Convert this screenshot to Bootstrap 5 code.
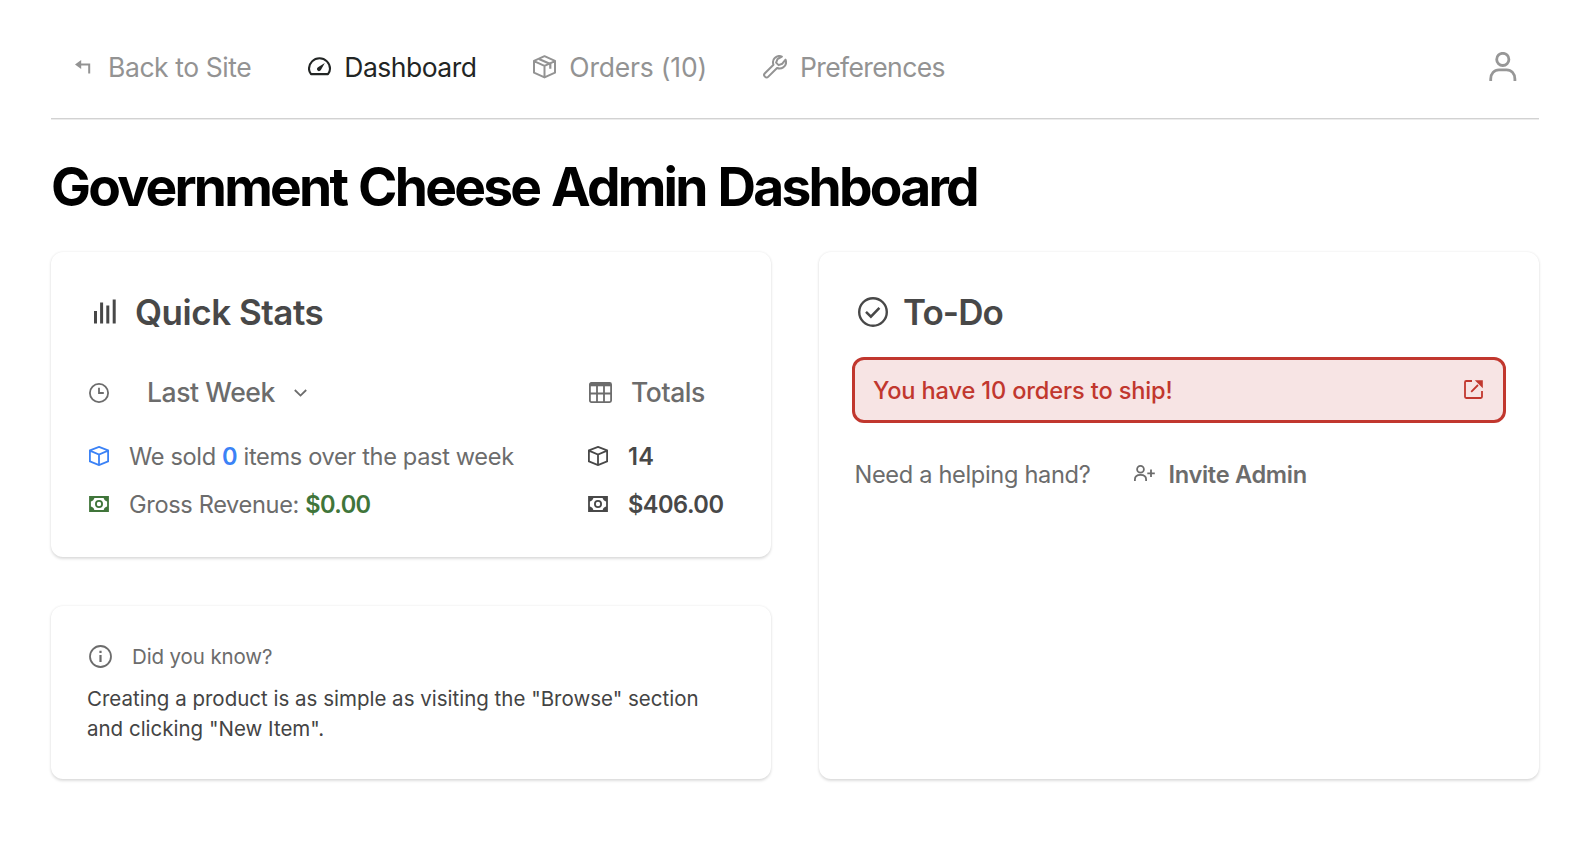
<!DOCTYPE html>
<html lang="en">
<head>
<meta charset="utf-8">
<meta name="viewport" content="width=device-width, initial-scale=1">
<title>Government Cheese Admin Dashboard</title>
<link href="https://cdn.jsdelivr.net/npm/bootstrap@5.3.0/dist/css/bootstrap.min.css" rel="stylesheet">
<style>
  body { font-family: Inter, "Liberation Sans", sans-serif; background: #fff; color: #6c6c6c; font-size: 23.6px; }
  svg { flex: none; display: block; fill: none; stroke: currentColor; stroke-width: 1.8; }
  a { color: inherit; text-decoration: none; }
  .page { padding: 0 45px 60px 51px; }
  .topbar { height: 119px; padding: 16px 22px 0 20.5px; border-bottom: 1px solid #d2d2d2; box-shadow: 0 1px 0 #ececec; }
  .topbar .nav-link { color: #939393; font-size: 26.5px; line-height: 40px; padding: 0; gap: 12.5px; letter-spacing: -.42px; }
  .topbar .nav-link.active { color: #222524; letter-spacing: -.52px; }
  .topbar .nav { gap: 56.5px; }
  .topbar .account { color: #979797; margin-bottom: 2px; }
  .page-title { font-size: 53.3px; font-weight: 700; line-height: 133px; height: 133px; letter-spacing: -2.76px; word-spacing: 2px; color: #000; padding-top: 1px; }
  .panel { border: 0; border-radius: 12px; box-shadow: 0 1.5px 3px rgba(0,0,0,.13), 0 0 3px rgba(0,0,0,.05); }
  .columns { grid-template-columns: 1fr 1fr; gap: 48px; }
  .left-col { gap: 48.5px; }
  .stats { height: 305px; padding: 38px 36px 0 37px; }
  .tip { height: 173.5px; padding: 36px 36px 0; font-size: 20.5px; }
  .todo { padding: 38px 33px 0; }
  .panel-title { font-size: 35px; font-weight: 600; line-height: 44px; color: #484848; letter-spacing: -.47px; }
  .line { height: 40px; line-height: 40px; white-space: nowrap; letter-spacing: -.35px; }
  .line svg.up { margin-bottom: 2.5px; }
  .period { width: 500px; }
  .subhead { font-size: 26.5px; font-weight: 500; letter-spacing: -.41px; }
  .strong-dark { color: #484848; }
  .sold { color: #3b82f6; }
  .money { color: #40753a; }
  .tip p { color: #444; line-height: 30px; margin: 12px 0 0; }
  .alert-ship { height: 66px; margin-top: 22.5px; padding: 2px 20.5px 0 18px; border: 3px solid #c1372e; border-radius: 12px; background: #f7e4e4; color: #c1372e; font-weight: 500; letter-spacing: -.14px; }
</style>
</head>
<body>
<svg width="0" height="0" class="position-absolute">
  <symbol id="cube" viewBox="0 0 20 20"><path d="M10 .9 19.1 4.4V15.4L10 19.1.9 15.4V4.4ZM.9 4.6 10 8.6l9.1-4M10 8.6V19"/></symbol>
  <symbol id="cash" viewBox="0 0 20 16"><path d="M1 1h18v14H1Z"/><path d="M1 1h4.500A4.500 4.500 0 0 1 1 5.500ZM19 1h-4.500a4.500 4.500 0 0 0 4.500 4.500ZM1 15h4.500a4.500 4.500 0 0 0-4.500-4.500ZM19 15h-4.500a4.500 4.500 0 0 1 4.500-4.500Z" fill="currentColor" stroke="none"/><circle cx="10" cy="8" r="3.100"/></symbol>
</svg>
<div class="page">
  <header class="topbar d-flex align-items-center justify-content-between">
    <nav class="nav flex-nowrap">
      <a class="nav-link d-flex align-items-center" href="#">
        <svg width="24" height="24" viewBox="0 0 24 24"><path d="M8 9.5h9.2v9" style="stroke-width:2"/><path d="M3 9.500 9.200 5v9Z" fill="currentColor" stroke="none"/></svg>
        Back to Site</a>
      <a class="nav-link active d-flex align-items-center" href="#">
        <svg width="24" height="24" viewBox="0 0 24 24" style="stroke-width:2.1"><path d="M3 19.1C1.700 17.600 1 16 1 13.800a10.500 10.500 0 0 1 21 0c0 2.200-.7 3.800-2 5.300Z" stroke-linejoin="round"/><path d="M16.800 7.900 13 14.800a2.100 2.100 0 1 1-3-2.600Z" fill="currentColor" stroke="none"/></svg>
        Dashboard</a>
      <a class="nav-link d-flex align-items-center" href="#">
        <svg width="24" height="24" viewBox="0 0 24 24" stroke-linejoin="round" style="stroke-width:2"><path d="M11.500 1.200 22 5.900V17.700L11.500 22.400 1 17.700V5.900ZM1 6.100l10.500 4.800L22 6.100M11.500 10.700v11.500"/><path d="m6 3.900 11.300 5.100v4.800" style="stroke-width:2.200"/></svg>
        <span style="letter-spacing:-.2px">Orders (10)</span></a>
      <a class="nav-link d-flex align-items-center" href="#">
        <svg width="24" height="24" viewBox="1.500 1.700 21.500 21.500" stroke-linejoin="round"><path d="m14.500 5.300-1.300 3.200 2.300 2.300 3.300-1.300 2.900-3.600c1.100 3-.1 5.500-2.100 6.900-1.700 1.200-3.700 1.200-5.500.600L6.300 21.100a2.100 2.100 0 0 1-3.100-3.100l7.700-7.500C10 8 10.500 5.800 12 4.400c1.700-1.700 4.200-2.200 6.400-1.300Z"/></svg>
        <span style="letter-spacing:-.6px">Preferences</span></a>
    </nav>
    <a class="account" href="#" aria-label="Account"><svg width="28" height="29" viewBox="0 0 28 29" style="stroke-width:2.8"><circle cx="13.800" cy="7.400" r="6.100"/><path d="M1.700 29v-2c0-5.500 3.500-9.200 8.300-9.200h7.600c4.800 0 8.300 3.700 8.300 9.200v2"/></svg></a>
  </header>

  <h1 class="page-title m-0">Government Cheese Admin Dashboard</h1>

  <main class="columns d-grid">
    <div class="left-col d-flex flex-column">
      <section class="panel card stats">
        <h2 class="panel-title d-flex align-items-center m-0">
          <svg style="stroke-width:3;margin:0 19px 2px 6px" width="22" height="25" viewBox="0 0 22 25"><path d="M1.500 12v12.500M7.600 3.500v21M13.800 6.500v18M20.200 .500v24"/></svg>
          Quick Stats</h2>
        <div class="line subhead d-flex" style="margin-top:38px">
          <div class="period d-flex align-items-center">
            <svg style="margin:1px 38px 0 1px" width="20" height="20" viewBox="0 0 20 20"><circle cx="10" cy="10" r="9.100"/><path d="M10 4.700V10h4.800"/></svg>
            Last Week
            <svg style="margin-left:19.5px;margin-top:2px" width="13" height="8" viewBox="0 0 13 8"><path d="m.8 1 5.700 5.600L12.200 1"/></svg>
          </div>
          <div class="d-flex align-items-center">
            <svg style="margin:1px 19.5px 0 .5px" width="23" height="21" viewBox="0 0 23 21"><rect x=".9" y=".9" width="21.200" height="19.200" rx="1.500"/><path d="M1 2.600h21" style="stroke-width:3.4"/><path d="M1 11.500h21M8 2v18M15 2v18"/></svg>
            Totals
          </div>
        </div>
        <div class="line d-flex" style="margin-top:25px">
          <div class="period d-flex align-items-center">
            <svg class="up sold" style="margin-left:1px;margin-right:20px" width="20" height="20"><use href="#cube"/></svg>
            <span>We sold <b class="sold fw-semibold">0</b> items over the past week</span>
          </div>
          <div class="strong-dark fw-semibold d-flex align-items-center">
            <svg class="up" style="margin-right:20px" width="20" height="20"><use href="#cube"/></svg>
            <span style="letter-spacing:.3px">14</span>
          </div>
        </div>
        <div class="line d-flex mt-2">
          <div class="period d-flex align-items-center">
            <svg class="up money" style="margin-left:1px;margin-right:20px" width="20" height="16"><use href="#cash"/></svg>
            <span>Gross Revenue: <b class="money fw-semibold" style="letter-spacing:-.6px">$0.00</b></span>
          </div>
          <div class="strong-dark fw-semibold d-flex align-items-center" style="letter-spacing:-.5px">
            <svg class="up" style="margin-right:20px" width="20" height="16"><use href="#cash"/></svg>
            $406.00
          </div>
        </div>
      </section>

      <section class="panel card tip">
        <div class="d-flex align-items-center" style="line-height:30px;letter-spacing:-.12px">
          <svg style="margin:0 20px 0 2px" width="23" height="23" viewBox="0 0 23 23"><circle cx="11.500" cy="11.500" r="10.500"/><path d="M11.500 10v7M11.500 5.800v2.200" style="stroke-width:2.2"/></svg>
          Did you know?
        </div>
        <p>Creating a product is as simple as visiting the "Browse" section and clicking "New Item".</p>
      </section>
    </div>

    <section class="panel card todo">
      <h2 class="panel-title d-flex align-items-center m-0" style="letter-spacing:-.93px">
        <svg style="margin:0 15px 1px 6px" width="30" height="30" viewBox="0 0 30 30"><circle cx="15" cy="15" r="13.800" style="stroke-width:2.4"/><path d="m8 14.800 4.900 4.900 8.500-8.900" style="stroke-width:2.5"/></svg>
        To-Do</h2>
      <a class="alert-ship d-flex align-items-center justify-content-between" href="#">
        You have 10 orders to ship!
        <svg style="margin-bottom:3px" width="19" height="19" viewBox="0 0 19 19"><path d="M8 1H2.200Q1 1 1 2.200v14.600Q1 18 2.200 18h14.600Q18 18 18 16.800V11M7.200 11.800 14 5"/><path d="M10.800.2H18.800V8.200Z" fill="currentColor" stroke="none"/></svg>
      </a>
      <div class="line d-flex align-items-center" style="margin-top:32px;padding-left:2.5px">
        <span style="letter-spacing:-.33px">Need a helping hand?</span>
        <a class="fw-semibold d-flex align-items-center" style="margin-left:43.5px;letter-spacing:-.3px" href="#">
          <svg style="margin:0 13.5px 3px 0" width="21" height="16" viewBox="0 0 21 16"><circle cx="6.500" cy="4.300" r="3.400"/><path d="M.9 16v-1.500c0-2.900 2-4.600 5.600-4.600s5.600 1.700 5.600 4.600V16M17 4.500v7.600M13.300 8.300h7.500"/></svg>
          Invite Admin</a>
      </div>
    </section>
  </main>
</div>
<script src="https://cdn.jsdelivr.net/npm/bootstrap@5.3.0/dist/js/bootstrap.bundle.min.js"></script>
</body>
</html>
